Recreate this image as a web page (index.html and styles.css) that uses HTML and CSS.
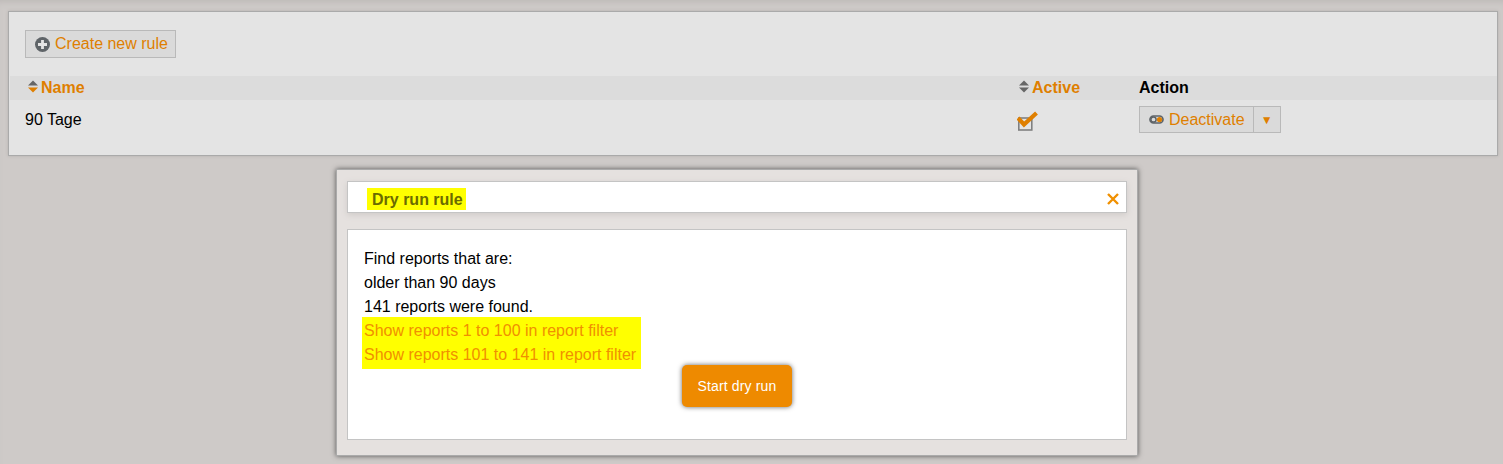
FILE: index.html
```html
<html>
<head>
    <title>Rules</title>
    <link rel="stylesheet" href="styles.css">
</head>
<body>
    <div class="panel">
        <div class="toolbar">
            <a class="btn" href="#">
                <svg class="icon" width="15" height="15" viewBox="0 0 15 15">
                    <circle cx="7.5" cy="7.5" r="7.5" fill="#5f6468"/>
                    <path d="M7.5 3v9M3 7.5h9" stroke="#e4e4e4" stroke-width="2.8"/>
                </svg>
                Create new rule
            </a>
        </div>
        <div class="row head">
            <div class="col-name">
                <svg class="sort" width="10" height="13" viewBox="0 0 10 13">
                    <path d="M5 0.5l5 5h-10z" fill="#666"/>
                    <path d="M5 12.5l5-5h-10z" fill="#df7f00"/>
                </svg>Name
            </div>
            <div class="col-active">
                <svg class="sort" width="10" height="13" viewBox="0 0 10 13">
                    <path d="M5 0.5l5 5h-10z" fill="#666"/>
                    <path d="M5 12.5l5-5h-10z" fill="#666"/>
                </svg>Active
            </div>
            <div class="col-action">Action</div>
        </div>
        <div class="row body-row">
            <div class="col-name plain">90 Tage</div>
            <div class="col-active">
                <svg class="check" width="21" height="21" viewBox="0 0 21 21">
                    <rect x="1.8" y="8" width="13" height="12" fill="none" stroke="#808080" stroke-width="1.6"/>
                    <path d="M1 8l6 6.5L19.5 3" fill="none" stroke="#df7f00" stroke-width="4.2"/>
                </svg>
            </div>
            <div class="col-action">
                <div class="split">
                    <a class="split-main" href="#">
                        <svg class="icon" width="15" height="9" viewBox="0 0 15 9">
                            <rect x="1" y="1" width="13" height="7" rx="3.5" fill="#dadada" stroke="#5f6468" stroke-width="1.7"/>
                            <circle cx="4.5" cy="4.5" r="2.6" fill="#dadada" stroke="#5f6468" stroke-width="1.5"/>
                            <circle cx="10.5" cy="4.5" r="2.6" fill="#df7f00"/>
                        </svg>
                        Deactivate
                    </a>
                    <a class="split-arrow" href="#">▼</a>
                </div>
            </div>
        </div>
    </div>

    <div class="dialog">
        <div class="dialog-title">
            <span class="mark title-text">Dry run rule</span>
            <svg class="close" width="12" height="12" viewBox="0 0 12 12">
                <path d="M1 1l10 10M11 1L1 11" stroke="#f09000" stroke-width="2.4"/>
            </svg>
        </div>
        <div class="dialog-body">
            <div>Find reports that are:</div>
            <div>older than 90 days</div>
            <div>141 reports were found.</div>
            <div class="mark links">
                <a href="#">Show reports 1 to 100 in report filter</a><br>
                <a href="#">Show reports 101 to 141 in report filter</a>
            </div>
            <div class="actions">
                <a class="start" href="#">Start dry run</a>
            </div>
        </div>
    </div>
</body>
</html>
```

FILE: styles.css
```css
html, body {
    margin: 0;
    padding: 0;
}

body {
    height: 464px;
    overflow: hidden;
    padding-top: 11px;
    box-sizing: border-box;
    background: #cecac8;
    box-shadow: inset 0 6px 6px -4px #bdb9b7;
    font-family: "Liberation Sans", Arial, sans-serif;
    font-size: 16px;
    color: #000;
}

a {
    color: #df7f00;
    text-decoration: none;
}

.panel {
    width: 1488px;
    height: 143px;
    margin-left: 8px;
    background: #e4e4e4;
    border: 1px solid #aaa;
    box-shadow: 0 0 3px #b5b1af;
}

.toolbar {
    height: 64px;
    padding: 18px 0 0 16px;
    box-sizing: border-box;
}

.btn {
    display: inline-flex;
    align-items: center;
    height: 28px;
    padding: 0 7px 0 9px;
    box-sizing: border-box;
    background: #dadada;
    border: 1px solid #b9b9b9;
}

.btn .icon {
    margin-right: 5px;
}

.row {
    display: flex;
}

.head {
    height: 24px;
    margin-left: 1px;
    align-items: center;
    background: #dcdcdc;
    font-weight: bold;
    color: #df7f00;
}

.col-name {
    flex: 1;
    padding-left: 18px;
}

.col-active {
    width: 120px;
}

.col-action {
    width: 358px;
    color: #000;
}

.sort {
    margin-right: 3px;
}

.body-row {
    margin-left: 1px;
    padding-top: 6px;
}

.plain {
    padding-left: 15px;
    line-height: 27px;
}

.check {
    display: block;
    margin: 4px 0 0 -2px;
}

.split {
    display: inline-flex;
    height: 27px;
    background: #dadada;
    border: 1px solid #b9b9b9;
    box-sizing: border-box;
}

.split-main {
    display: flex;
    align-items: center;
    padding: 0 8px 0 9px;
    border-right: 1px solid #b9b9b9;
}

.split-main .icon {
    margin-right: 5px;
}

.split-arrow {
    display: flex;
    align-items: center;
    justify-content: center;
    width: 26px;
    font-size: 12px;
}

.dialog {
    width: 802px;
    height: 287px;
    margin: 13px 0 0 336px;
    padding: 11px 10px 0;
    box-sizing: border-box;
    background: #e5e1df;
    border: 1px solid #aaa;
    box-shadow: 0 0 5px #555;
}

.dialog-title {
    display: flex;
    align-items: center;
    justify-content: space-between;
    height: 32px;
    padding: 4px 7px 0 19px;
    box-sizing: border-box;
    background: #fff;
    border: 1px solid #c4c4c4;
    box-shadow: 0 2px 6px #cfcbc9;
}

.close {
    margin-top: -1px;
}

.mark {
    background: #ffff00;
}

.title-text {
    padding: 3px 3px 1px 5px;
    line-height: 18px;
    font-weight: bold;
    color: #6b6b00;
}

.dialog-body {
    height: 211px;
    margin-top: 16px;
    padding: 17px 16px 0;
    box-sizing: border-box;
    background: #fff;
    border: 1px solid #c4c4c4;
    line-height: 24px;
}

.links {
    width: 275px;
    margin: -2px 0 0 -2px;
    padding: 2px;
}

.links a {
    color: #f09000;
}

.actions {
    display: flex;
    justify-content: center;
    margin-top: -4px;
}

.start {
    display: block;
    width: 110px;
    height: 42px;
    background: #ee8a00;
    border-radius: 5px;
    box-shadow: 0 0 5px #666;
    color: #fff;
    font-size: 14px;
    letter-spacing: 0.15px;
    line-height: 42px;
    text-align: center;
}
```
